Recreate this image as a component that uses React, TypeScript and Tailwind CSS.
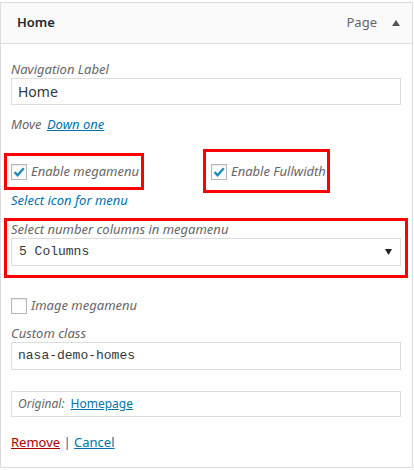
const sans = "font-['Noto_Sans',sans-serif]";
const mono = "font-['Liberation_Mono',monospace]";

const Checkbox = ({ checked }: { checked?: boolean }) => (
  <span className="flex h-4 w-4 shrink-0 items-center justify-center border border-[#b4b9be] bg-white shadow-[inset_0_1px_2px_rgba(0,0,0,0.1)]">
    {checked && (
      <svg width="14" height="14" viewBox="0 0 14 14">
        <path d="M2.5 7.2 L5.6 10.2 L11.8 3.2" fill="none" stroke="#1e8cbe" strokeWidth="2.4" />
      </svg>
    )}
  </span>
);

const Label = ({ children, className = "" }: { children: React.ReactNode; className?: string }) => (
  <div className={`text-[13px] italic leading-[17px] text-[#666] ${className}`}>{children}</div>
);

export default function App() {
  return (
    <div className={`relative h-[470px] w-[414px] bg-white pt-[2px] ${sans}`}>
      <div className="w-[413px] border border-[#dcdcde]">
        <div className="flex h-[41px] items-center border-b border-[#dcdcde] bg-[#fafafa] pl-4 pr-[12px]">
          <span className="text-[13px] font-semibold text-[#23282d]">Home</span>
          <span className="ml-auto text-[13px] text-[#666]">Page</span>
          <svg className="ml-[15px]" width="8" height="6" viewBox="0 0 8 6">
            <path d="M0 6 L4 0 L8 6 Z" fill="#555" />
          </svg>
        </div>

        <div className="pb-[16px] pl-[10px] pr-[11px]">
          <Label className="mt-[17px]">Navigation Label</Label>
          <div className="flex h-[27px] items-center border border-[#ddd] px-[6px] text-[14px] text-[#32373c]">
            Home
          </div>

          <div className="mt-[10px] text-[13px] italic leading-[18px] text-[#666]">
            Move{" "}
            <a className="ml-[2px] text-[#0073aa] underline">Down one</a>
          </div>

          <div className="mt-[30px] flex h-[18px] items-center">
            <label className="flex w-[200px] items-center gap-[4px] text-[13px] italic text-[#666]">
              <Checkbox checked />
              Enable megamenu
            </label>
            <label className="flex items-center gap-[4px] text-[13px] italic text-[#666]">
              <Checkbox checked />
              Enable Fullwidth
            </label>
          </div>

          <div className="mt-[10px] text-[13px] italic leading-[18px] text-[#0073aa]">Select icon for menu</div>

          <div className="mt-[11px] text-[13px] italic leading-[18px] text-[#666]">
            Select number columns in megamenu
          </div>
          <div className={`flex h-[28px] items-center border border-[#ddd] pl-[7px] pr-[8px] text-[13px] text-[#32373c] ${mono}`}>
            5 Columns
            <svg className="ml-auto" width="7" height="6" viewBox="0 0 7 6">
              <path d="M0 0 L7 0 L3.5 6 Z" fill="#222" />
            </svg>
          </div>

          <label className="mt-[31px] flex h-[18px] items-center gap-[4px] text-[13px] italic text-[#666]">
            <Checkbox />
            Image megamenu
          </label>

          <Label className="mt-[10px]">Custom class</Label>
          <div className={`flex h-[28px] items-center border border-[#ddd] px-[6px] text-[13px] text-[#32373c] ${mono}`}>
            nasa-demo-homes
          </div>

          <div className="mt-[21px] flex h-[26px] items-center gap-[6px] border border-[#ddd] px-[6px] text-[12px]">
            <span className="italic text-[#666]">Original:</span>
            <a className="text-[#0073aa] underline">Homepage</a>
          </div>

          <div className="mt-[16px] text-[13px] leading-[18px] text-[#0073aa]">
            <a className="text-[#a00] underline">Remove</a> | <a className="underline">Cancel</a>
          </div>
        </div>
      </div>

      <div className="absolute left-[4px] top-[153px] h-[37px] w-[140px] border-[3px] border-[#ff0000]" />
      <div className="absolute left-[203px] top-[149px] h-[44px] w-[127px] border-[3px] border-[#ff0000]" />
      <div className="absolute left-[4px] top-[218px] h-[60px] w-[404px] border-[3px] border-[#ff0000]" />
    </div>
  );
}
